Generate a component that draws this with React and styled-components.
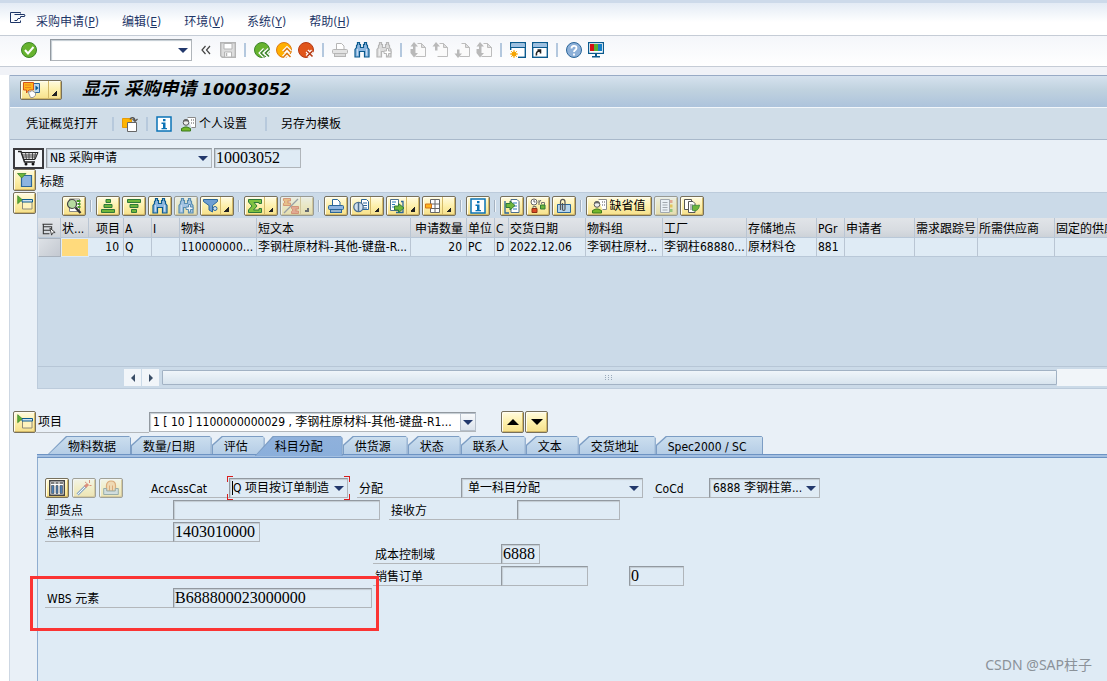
import React from 'react';
import styled, { createGlobalStyle, css } from 'styled-components';

const GlobalStyle = createGlobalStyle`
	* {
		box-sizing: border-box;
	}
	body {
		margin: 0;
		background: #fff;
		color: #000;
		font: 12px/16px 'DejaVu Sans Condensed', 'Noto Sans', 'Noto Sans CJK SC', sans-serif;
	}
	button, input, select {
		font: inherit;
		color: inherit;
		margin: 0;
	}
	svg {
		display: block;
		flex: none;
	}
`;

const Page = styled.div`
	position: relative;
	display: flex;
	flex-direction: column;
	min-height: 100vh;
	overflow: hidden;
`;

const MenuBar = styled.nav`
	display: flex;
	align-items: center;
	gap: 23px;
	height: 36px;
	padding: 6px 10px 0;
	color: #1d3567;
	border-top: 3px solid #cddaea;
	border-bottom: 1px solid #c5ccd6;
	background: linear-gradient(#e3ebf5, #fff 60%);
	> svg {
		align-self: flex-start;
	}
`;

const MenuItem = styled.button`
	padding: 0;
	border: 0;
	background: none;
	white-space: nowrap;
	&:first-of-type {
		margin-left: -13px;
	}
`;

const SystemBar = styled.div`
	display: flex;
	align-items: center;
	gap: 6px;
	height: 31px;
	padding: 0 21px 2px;
	border-bottom: 1px solid #c5ccd6;
	background: linear-gradient(#f4f6fa, #fff);
`;

const IconButton = styled.button`
	display: flex;
	align-items: center;
	justify-content: center;
	width: 16px;
	height: 16px;
	padding: 0;
	border: 0;
	background: none;
	&:first-child {
		margin-right: 7px;
	}
`;

const BarLine = styled.span`
	width: 6px;
	height: 14px;
	background: linear-gradient(#b4c8de, #b4c8de) center / 2px 14px no-repeat;
`;

const Workspace = styled.main`
	flex: 1;
	display: flex;
	flex-direction: column;
	margin-left: 9px;
	border-left: 1px solid #cdd7e3;
	background: #e9f0f7;
`;

const Band = styled.div`
	height: 8px;
	background: #f0f2f7;
`;

const TitleBar = styled.header`
	display: flex;
	align-items: center;
	gap: 20px;
	height: 32px;
	padding: 0 10px 4px;
	border-top: 1px solid #98abc6;
	background: linear-gradient(#d6e2ee, #c0d2df 45%, #adc3dc);
	h1 {
		margin: 0;
		font: italic 700 16px/24px 'DejaVu Sans', 'Noto Sans CJK SC', sans-serif;
		white-space: nowrap;
	}
	h1 span {
		font-size: 18px;
	}
`;

const FunctionBar = styled.div`
	display: flex;
	align-items: center;
	height: 33px;
	padding: 0 10px;
	border-top: 1px solid #f2f6fa;
	border-bottom: 1px solid #a9b9cb;
	background: #d0dde8;
`;

const FunctionButton = styled.button`
	display: flex;
	align-items: center;
	gap: 2px;
	padding: ${p => (p.$text ? '0 6px' : 0)};
	border: 0;
	background: none;
	white-space: nowrap;
	svg + & {
		padding-left: 0;
	}
`;

const PersonalButton = styled(FunctionButton)`
	padding: 0 10px 0 9px;
`;

const FunctionLine = styled.span`
	width: 2px;
	height: 14px;
	margin: 0 8px;
	background: #b7c9dc;
`;

const Row = styled.div`
	position: relative;
	display: flex;
	align-items: center;
	height: ${p => p.$height || 20}px;
	padding-left: ${p => p.$indent || 0}px;
	gap: ${p => p.$gap || 0}px;
`;

const Overview = styled.section`
	display: flex;
	flex-direction: column;
	padding: 8px 0 0 3px;
`;

const yellow = css`
	border: 1px solid #77705c;
	border-radius: 2px;
	background: linear-gradient(#fffbe0, #fdf0ac 50%, #f6e08a);
	box-shadow: inset 1px 1px 0 #fffdf0, inset -1px -1px 0 #d3b968;
`;

const CartButton = styled.button`
	display: flex;
	align-items: center;
	justify-content: center;
	width: 31px;
	height: 21px;
	padding: 0;
	border: 2px solid #3a3a3e;
	background: #f4f7fa;
`;

const SideButton = styled.button`
	${yellow}
	display: flex;
	align-items: center;
	justify-content: center;
	flex: none;
	width: 23px;
	height: 22px;
	padding: 0;
`;

const GridArea = styled.div`
	display: flex;
	align-items: flex-start;
	gap: 1px;
`;

const Grid = styled.div`
	flex: 1;
	min-width: 0;
	border: 1px solid #bccbdb;
	border-right: 0;
	background: #cbdae8;
`;

const GridTools = styled.div`
	display: flex;
	align-items: center;
	gap: 2px;
	height: 25px;
	padding-left: 24px;
`;

const TOOL_WIDTHS = { split: 34, service: 42, text: 66 };

const ToolButton = styled.button`
	${yellow}
	display: flex;
	align-items: center;
	justify-content: ${p => (p.$kind === 'split' || p.$kind === 'service' ? 'flex-start' : 'center')};
	flex: none;
	width: ${p => TOOL_WIDTHS[p.$kind] || 24}px;
	height: 20px;
	padding: 0 ${p => (p.$kind === 'split' || p.$kind === 'service' ? 2 : 0)}px;
	gap: 1px;
	opacity: ${p => (p.$faded ? 0.6 : 1)};
	white-space: nowrap;
`;

const SplitMark = styled.span`
	align-self: stretch;
	flex: 0 0 11px;
	margin-left: auto;
	border-left: 1px solid #d3b968;
	background: linear-gradient(135deg, transparent 50%, #222 50%) right 2px bottom 3px / 5px 5px no-repeat;
`;

const ToolLine = styled.span`
	width: 2px;
	height: 12px;
	margin: 0 2px;
	border-left: 1px solid #a5b2c0;
	border-right: 1px solid #eef3f8;
`;

const Table = styled.table`
	width: 100%;
	table-layout: fixed;
	border-collapse: separate;
	border-spacing: 0;
	th, td {
		height: 20px;
		padding: 0 1px;
		border-right: 1px solid #b9c5d3;
		border-bottom: 1px solid #b9c8d8;
		overflow: hidden;
		white-space: nowrap;
		text-align: left;
		font-weight: 400;
		line-height: 16px;
	}
	th {
		padding-top: 2px;
		background: linear-gradient(#e1e4e8, #d8dce1 60%, #cdd2d8);
	}
	td {
		height: 19px;
		background: #dfebf5;
	}
	th:last-child, td:last-child {
		border-right: 0;
	}
	.right {
		text-align: right;
		padding-right: 4px;
	}
	th.right {
		padding-right: 3px;
	}
	th svg {
		margin-left: 3px;
	}
	.pick {
		border: 1px solid #a9b2bd;
		border-left-color: #e6eaee;
		background: linear-gradient(135deg, #dde1e6, #c4c9d1);
	}
	.status {
		background: #ffda7c;
		border: 1px solid #dfebf5;
	}
`;

const GridSpace = styled.div`
	height: 109px;
	border-bottom: 1px solid #b7c6d6;
	box-sizing: content-box;
`;

const ScrollRow = styled.div`
	display: flex;
	align-items: center;
	gap: 1px;
	height: 21px;
	padding-left: 86px;
	button {
		display: flex;
		align-items: center;
		justify-content: center;
		width: 17px;
		height: 17px;
		padding: 0;
		border: 0;
		background: #f1f5f9;
	}
`;

const Thumb = styled.div`
	flex: 18;
	display: flex;
	align-items: center;
	justify-content: center;
	height: 15px;
	margin-left: 2px;
	border: 1px solid #a2b2c4;
	border-radius: 1px;
	background: linear-gradient(#f0f5fa, #d8e4ee);
`;

const Track = styled.div`
	flex: 1;
	height: 17px;
	margin-left: -1px;
	background: #f1f5f9;
`;

const Label = styled.label`
	align-self: stretch;
	flex: none;
	width: ${p => p.$width}px;
	padding: 4px 0 0 ${p => p.$pad || 2}px;
	border-bottom: 1px solid #b3b7bb;
	line-height: 15px;
	white-space: nowrap;
`;

const Caption = styled.h2`
	margin: 3px 0 0 2px;
	font-size: 12px;
	font-weight: 400;
	line-height: 16px;
`;

const fieldLook = css`
	border: 1px solid #9299a0;
	border-right-color: #b0b5ba;
	border-bottom-color: #b0b5ba;
	border-radius: 0;
	box-shadow: inset 1px 1px 1px #c3cbd2;
	background: ${p => (p.$white ? '#fff' : '#dfebf5')};
	outline: 0;
`;

const Field = styled.input`
	${fieldLook}
	flex: none;
	width: ${p => p.$width}px;
	height: 20px;
	padding: 0 1px;
	font: 16px/18px 'Liberation Serif', serif;
`;

const SelectWrap = styled.span`
	position: relative;
	flex: none;
	display: grid;
	align-items: center;
	width: ${p => p.$width}px;
	height: ${p => p.$height || 20}px;
	> * {
		grid-area: 1 / 1;
	}
	> svg {
		justify-self: end;
		margin-right: 4px;
		pointer-events: none;
	}
`;

const SelectBox = styled.select`
	${fieldLook}
	appearance: none;
	width: 100%;
	height: 100%;
	padding: 0 16px 0 ${p => p.$pad || 3}px;
`;

const ComboButton = styled.span`
	justify-self: end;
	display: flex;
	align-items: center;
	justify-content: center;
	width: 16px;
	height: 18px;
	border: 1px solid #b6bfca;
	background: linear-gradient(#f7f9fb, #dbe3ec);
	pointer-events: none;
`;

const corner = 'linear-gradient(#d81e1e, #d81e1e)';

const FocusCorners = styled.i`
	position: absolute;
	inset: -2px;
	pointer-events: none;
	background:
		${corner} left top / 6px 1px, ${corner} left top / 1px 6px,
		${corner} right top / 6px 1px, ${corner} right top / 1px 6px,
		${corner} left bottom / 6px 1px, ${corner} left bottom / 1px 6px,
		${corner} right bottom / 6px 1px, ${corner} right bottom / 1px 6px,
		linear-gradient(#000, #000) 5px 5px / 1px 14px;
	background-repeat: no-repeat;
`;

const ItemRow = styled.div`
	display: flex;
	align-items: center;
	height: 22px;
	margin-top: 22px;
	padding-left: 3px;
`;

const Spinners = styled.div`
	display: flex;
	gap: 1px;
	margin-left: 25px;
`;

const TabStrip = styled.div`
	display: flex;
	height: 22px;
	margin: 3px 0 0 27px;
	padding-left: 11px;
	background: linear-gradient(#6d93c3 1px, #a3bfe1 1px 3px, #6d93c3 3px) bottom / 100% 4px no-repeat;
`;

const TAB_PADDING = {
	first: '0 15px 0 20px',
	active: '0 20px',
	plain: '0 17px 0 12px',
};

const Tab = styled.button`
	--slope: ${p => (p.$kind === 'plain' ? '0 9px, 10px 0' : '0 100%, 18px 0')};
	position: relative;
	z-index: ${p => (p.$kind === 'active' ? 1 : 0)};
	height: ${p => (p.$kind === 'active' ? 20 : 18)}px;
	margin-left: ${p => (p.$kind === 'active' ? -10 : 0)}px;
	padding: ${p => TAB_PADDING[p.$kind]};
	border: 0;
	background: #7c9dc4;
	clip-path: polygon(0 100%, var(--slope), calc(100% - 2px) 0, 100% 2px, 100% 100%);
	line-height: 22px;
	white-space: nowrap;
	&::before {
		content: '';
		position: absolute;
		z-index: -1;
		inset: 1px 1px 0;
		background: ${p => (p.$kind === 'active' ? 'linear-gradient(#8fb1dc, #8bafdb)' : 'linear-gradient(#cbdeee, #b5cde6)')};
		clip-path: polygon(0 100%, var(--slope), 100% 0, 100% 100%);
	}
`;

const Panel = styled.section`
	flex: 1;
	display: flex;
	flex-direction: column;
	gap: 2px;
	margin-left: 27px;
	padding: 20px 0 40px 7px;
	border-left: 1px solid #8fadd0;
	background: #dfebf5;
`;

const PanelTools = styled.div`
	display: flex;
	gap: 3px;
	margin-right: 26px;
`;

const Highlight = styled.i`
	position: absolute;
	left: -15px;
	top: -12px;
	width: 349px;
	height: 55px;
	border: 3px solid #fb3433;
	pointer-events: none;
`;

const Watermark = styled.div`
	position: absolute;
	right: 15px;
	bottom: 7px;
	color: #8b9299;
	font: 14px/18px 'Noto Sans', 'Noto Sans CJK SC', sans-serif;
`;

const Svg = ({ size = 16, children }) => (
	<svg width={size} height={size} viewBox='0 0 16 16' fill='none' aria-hidden='true'>
		{children}
	</svg>
);

const Caret = () => (
	<svg width='10' height='5' viewBox='0 0 10 5' aria-hidden='true'>
		<path d='M0 0h10L5 5z' fill='#22386c' />
	</svg>
);

const Disc = ({ fill, edge, children }) => (
	<Svg>
		<circle cx='8' cy='8' r='7.5' fill={fill} stroke={edge} />
		{children}
	</Svg>
);

const Binoculars = ({ fill = '#8db7e0', line = '#0b5a8e', plus }) => (
	<Svg>
		<path
			d='M3.500.500h2v2h1v3h3v-3h1v-2h2v2l1 1v2l1.500 2v7.500h-4.500V9.500h-5v5.500H1V7.500l1.500-2v-2l1-1z'
			fill={fill}
			stroke={line}
			strokeWidth='1.200'
		/>
		<path d='M3.500 7v6.500M12.500 7v6.500' stroke='#fff' strokeOpacity='.5' />
		{plus && <path d='M10.500 6.500h2v2.500h2.500v2.500h-2.500V14h-2v-2.500H8V9h2.500z' fill='#fff' stroke={line} />}
	</Svg>
);

const Page16 = ({ up, down, both }) => (
	<Svg>
		<path d='M7.500 1.500H11.500L15.500 5.500v9h-10' fill='#fafafa' stroke='#bdbdbd' />
		<path d='M11.500 1.500v4h4z' fill='#ddd' stroke='#bdbdbd' />
		{up && <path d='M4 0 .500 4.500H3v4h2.500v-4h2.500z' fill='#b9b9b9' />}
		{down && <path d='M4 16 .500 11.500H3v-4h2.500v4h2.500z' fill='#b9b9b9' />}
		{both && <path d='M4 0 .500 4.500H3v2.500H.500v4H3L.500 11 4 15.500l4-4.500H5.500V4.500h2.500z' fill='#b9b9b9' />}
	</Svg>
);

const Printer = ({ line = '#b5b5b5', fill = '#e3e3e3' }) => (
	<Svg>
		<path d='M4.500 7V1.500h5l2.500 2.500v3' fill='#fff' stroke={line} />
		<rect x='.5' y='7.500' width='15' height='4' rx='1' fill={fill} stroke={line} />
		<path d='M2 12h12v3H2z' fill={line} />
		<path d='M3 13h10' stroke='#fff' />
	</Svg>
);

const Person = () => (
	<Svg>
		<path d='M6.500 1.500h8v10h-4' fill='#fff' stroke='#8a8a8a' />
		<path d='M10 4h1m1 0h1M10 7h1m1 0h1' stroke='#555' strokeWidth='1.200' />
		<circle cx='5' cy='6.500' r='2.800' fill='#eee' stroke='#555' />
		<path d='M2 6c0-4 6-4 6 0-2-1-4-1-6 0z' fill='#666' />
		<path d='M.5 15v-2.500L4 11h2l3.500 1.500V15z' fill='#75b82b' stroke='#3b7a1c' />
	</Svg>
);

const Info = () => (
	<Svg>
		<rect x='1' y='1' width='14' height='14' fill='#fff' stroke='#0a73b6' strokeWidth='1.500' />
		<path d='M7 3h2.500v2.200H7zM5.500 6.500h4V12H11v1.300H5.500V12H7V8H5.500z' fill='#0a73b6' />
	</Svg>
);

const Exit = () => (
	<Svg>
		<path d='M10.500 4.500V3.500h-10v10h10V11.500' stroke='#1d3567' />
		<path d='M4.500 5.500h10l.5 1.500-1 .5H10.500M11 7.500l-1 2H8l-1 2H4.500' stroke='#1d3567' />
	</Svg>
);

const Check = () => (
	<Disc fill='#67b32e' edge='#3c842a'>
		<path d='m4 8 3 3.500 5.500-6.500' stroke='#fff' strokeWidth='2' />
	</Disc>
);

const Floppy = () => (
	<Svg>
		<path d='M.7.7h14.600v14.600H2.200L.7 13.800z' fill='#ddd' stroke='#b5b5b5' strokeWidth='1.400' />
		<path d='M4 1.500h8v5.500H4zM4.500 10h7v5h-7z' fill='#fff' stroke='#b5b5b5' />
		<path d='M6.500 11v3' stroke='#b5b5b5' strokeWidth='1.500' />
	</Svg>
);

const NAV_SHAPES = {
	back: 'm10.500 7.500-3.500 3.500 3.500 3.500m4.500-7-3.500 3.500 3.500 3.500',
	up: 'M7.500 10 11 6.500l3.500 3.500m-7 5L11 11.500l3.500 3.500',
	stop: 'm9 9 5.500 5.500m0-5.500L9 14.500',
};

const NavIcon = ({ fill, edge, kind }) => (
	<Disc fill={fill} edge={edge}>
		<path d={NAV_SHAPES[kind]} stroke='#fff' strokeWidth='4' />
		<path d={NAV_SHAPES[kind]} stroke={edge} strokeWidth='1.600' />
	</Disc>
);

const WindowIcon = ({ link }) => (
	<Svg>
		<rect x='.7' y='.7' width='14.600' height='14.600' fill='#fff' stroke='#0b5a8e' strokeWidth='1.400' />
		<path d='M1.500 1.500h13V5h-13z' fill='#9cc0e2' />
		<path d='M1 5.500h14' stroke='#0b5a8e' />
		{link ? (
			<path d='M4.500 13.500c-.5-3 .5-4.500 3.500-4.500M5.500 8h3v3.500' stroke='#222' strokeWidth='1.600' />
		) : (
			<>
				<path d='M0 8h8v8H0z' fill='#fff' />
				<circle cx='4' cy='12' r='2.500' fill='#f5a400' />
				<path d='M4 8v8M0 12h8M1.200 9.200l5.600 5.600m0-5.600-5.600 5.600' stroke='#f5a400' />
			</>
		)}
	</Svg>
);

const Help = () => (
	<Disc fill='#8db0d8' edge='#2b669a'>
		<path d='M5.500 6.500c0-3.500 5-3.500 5-.5 0 2-2.500 2-2.500 4M8 11.500v2' stroke='#fff' strokeWidth='1.800' />
	</Disc>
);

const Monitor = () => (
	<Svg>
		<rect x='.6' y='.6' width='14.800' height='10.800' fill='#fff' stroke='#0b5a8e' strokeWidth='1.200' />
		<path d='M2 2h4v7H2z' fill='#d40f14' />
		<path d='M6 2h4v7H6z' fill='#58b030' />
		<path d='M10 2h4v7h-4z' fill='#157fc8' />
		<path d='M7 12h2v2h3v1.500H4V14h3z' fill='#0b5a8e' />
	</Svg>
);

const Services = () => (
	<svg width='18' height='16' viewBox='0 0 18 16' fill='none' aria-hidden='true'>
		<path d='M10.500 1.500h6v9h-5' fill='#b9d7ef' stroke='#2b669a' />
		<path d='m12.500 3.500 3 2.500-3 2.500z' fill='#0b5a8e' />
		<path d='M.5.500h10v7.500H6L3.500 11V8h-3z' fill='#ffb51c' stroke='#d3531b' />
		<path d='M2.500 3h6M2.500 5.500h6' stroke='#d3531b' strokeDasharray='1 1' />
		<path d='m5 9.500 2 .5 2-1.500L12.500 11v2.500L10 15.500H7.500z' fill='#fff' stroke='#999' />
	</svg>
);

const OtherDoc = () => (
	<Svg>
		<path d='M.5 2.500h9v9h-9z' fill='#ffb400' stroke='#e59a0a' />
		<path d='M5.500 6.500h9v9h-9z' fill='#fff' stroke='#666' />
		<path d='M8 3.500c1-3 5-2.500 5 1.500M10.500 3l2.500 2.500L15.500 3' stroke='#555' strokeWidth='1.200' />
	</Svg>
);

const Cart = () => (
	<svg width='22' height='16' viewBox='0 0 22 16' fill='none' aria-hidden='true'>
		<path d='M0 1.500h3L6.500 12H17' stroke='#222' strokeWidth='1.500' />
		<path d='M3.500 2.500H20L17 9.500H6z' fill='#ddd' stroke='#222' />
		<path d='M4 5h15M5 7h13M7.500 2.500l1 7m2.500-7v7m3.500-7v7m3-7-1 7' stroke='#333' strokeWidth='.8' />
		<circle cx='8' cy='14' r='1.500' fill='#111' />
		<circle cx='15' cy='14' r='1.500' fill='#111' />
	</svg>
);

const Expand = () => (
	<Svg>
		<path d='M4.500 3.500h10v11h-10z' fill='#8db4e0' stroke='#2b669a' strokeWidth='1.200' />
		<path d='M.5 1.500h8.500L4.700 6z' fill='#6fb63a' stroke='#3b842a' strokeWidth='.8' />
	</Svg>
);

const Collapse = () => (
	<Svg>
		<path d='M5.500 5.500h9.500v8.500H5.500z' fill='#fff3be' stroke='#8f8a78' />
		<path d='M5 4.500h10.500v2.500H5z' fill='#cfe2f3' stroke='#0b5a8e' />
		<path d='M.7.700v8L5.200 4.700z' fill='#5fae34' stroke='#3b842a' strokeWidth='.7' />
	</Svg>
);

const Details = () => (
	<Svg>
		<path d='M3.500 1h10v12.500h-10z' fill='#fff' stroke='#888' />
		<path d='M10.500 3h4m-3 3h3m-3 3h3' stroke='#4a9a2c' strokeWidth='1.800' />
		<circle cx='6' cy='6' r='4.500' fill='#b6dba0' stroke='#444' strokeWidth='1.200' />
		<path d='m9.500 9.500 5 5.500' stroke='#333' strokeWidth='2.400' />
	</Svg>
);

const SortBars = ({ down }) => (
	<Svg>
		<path
			d={down ? 'M1.500 1.500h13v3h-13zM4 6.500h8v3H4zM5.500 11.500h5v3h-5z' : 'M6 1.500h4.500v3H6zM4 6.500h8v3H4zM1.500 11.500h13v3h-13z'}
			fill='#6fb63a'
			stroke='#2f7a3a'
		/>
	</Svg>
);

const Funnel = () => (
	<Svg>
		<path d='M.5 1.500h14v2l-5 4V14L6 12V7.500l-5.500-4z' fill='#6e9fd2' stroke='#2b669a' />
		<circle cx='12' cy='10.500' r='2' fill='#cfe2f3' stroke='#2b669a' />
	</Svg>
);

const Sigma = () => (
	<Svg>
		<path d='M1.500 1.500h13v4H12V4.500H7L10 8l-3.500 4H12v-1.500h2.500v4h-13V12L5 8 1.500 4z' fill='#7fc241' stroke='#2f7a3a' />
	</Svg>
);

const Subtotal = () => (
	<Svg>
		<path d='M.5.500h7V3H4.500L5.500 4l-1 1h3v2.500h-7V5.500L2 4 .5 2.500z' fill='#fbb04a' stroke='#d3531b' strokeWidth='.8' />
		<path d='M8.500 8.500h7V11h-3l1 1-1 1h3v2.500h-7v-2L10 12l-1.500-1.500z' fill='#f08a5d' stroke='#d3531b' strokeWidth='.8' />
		<path d='M15 1 1 15' stroke='#777' strokeWidth='1.200' />
	</Svg>
);

const Views = () => (
	<Svg>
		<path d='M8.500 1.500h5l2 2v8h-7z' fill='#fff' stroke='#2b669a' />
		<path d='M10 5h4m-4 2.500h4M10 10h4' stroke='#2b669a' />
		<circle cx='5.500' cy='9' r='4.700' fill='#cfe0ef' stroke='#4c6e8e' strokeWidth='1.300' />
		<path d='M5.500 5v8' stroke='#4c6e8e' strokeWidth='1.500' />
	</Svg>
);

const Export = ({ flip }) => (
	<Svg>
		<path d={flip ? 'M7 1.500h6l2 2v11H7z' : 'M1.500 1.500h8v11h-8z'} fill='#fff' stroke='#4c6e8e' />
		<path d={flip ? 'M9 5h4M9 8h4m-4 3h4' : 'M3 4h4M3 6.500h3M3 9h2'} stroke='#2b78b8' />
		<path d={flip ? 'M1 3v12h4' : 'M12 3.500h2v11H7'} stroke='#2b669a' strokeWidth='1.300' />
		<path
			d={flip ? 'M2 5.500h4v-2.500l5 4.500-5 4.500V9.500H2z' : 'M5.500 8h4V5.500l5.500 4.500-5.500 4.500V12h-4z'}
			fill='#6fb63a'
			stroke='#2f7a3a'
		/>
	</Svg>
);

const Layout = () => (
	<Svg>
		<path d='M5.500 1.500h9v13h-9zM5.500 6h9m-9 4.500h9M10 1.500v13' fill='#fff' stroke='#666' />
		<path d='M.5 6h6v4h-6z' fill='#ffb51c' stroke='#d3711b' />
	</Svg>
);

const Release = () => (
	<Svg>
		<circle cx='4' cy='4' r='3' fill='#fff' stroke='#666' />
		<path d='M4 2v2h1.500M9 2v5m2-5L9 4.500' stroke='#666' />
		<path d='M2 10.500h5v4H2z' fill='#dd4a25' stroke='#8f3014' />
		<path d='M3 10V8.500h3V10M11.500 6V4.500h3V7' stroke='#777' />
		<path d='M10.500 7h4.500v4h-4.500z' fill='#6fb63a' stroke='#2f7a3a' />
	</Svg>
);

const Attach = () => (
	<Svg>
		<path d='M1.500 6.500h13v8h-13z' fill='#b4d4ec' stroke='#2b669a' />
		<path d='M4.500 12V4c0-3.500 4.500-3.500 4.500 0v7c0 2-2.500 2-2.500 0V5' stroke='#555' strokeWidth='1.200' />
	</Svg>
);

const Notes = () => (
	<Svg>
		<path d='M2.500 1.500h9v13h-9z' fill='#fff' stroke='#888' />
		<path d='M4.500 4.500h5m-5 2.500h5m-5 2.500h5m-5 2.500h5' stroke='#888' />
		<path d='M12 2h2.500v3H12z' fill='#f08a5d' />
		<path d='M12 6.500h2.500v3H12z' fill='#f5b800' />
		<path d='M12 11h2.500v3H12z' fill='#6fb63a' />
	</Svg>
);

const Copies = () => (
	<Svg>
		<path d='M.5 1.500h7v10h-7z' fill='#fff' stroke='#555' />
		<path d='M4.500 3.500h4.500l2 2v9h-6.500z' fill='#fff' stroke='#555' />
		<path d='M6 7h3m-3 2h3m-3 2h3' stroke='#777' />
		<path d='M8.500 7.500c2-1 4 .5 7-.5-.5 5-3.500 6.500-7 5.500z' fill='#6fb63a' stroke='#2f7a3a' strokeWidth='.7' />
	</Svg>
);

const Columns = () => (
	<Svg>
		<path d='M.7.700h14.600v14.600H.7z' fill='#fff' stroke='#444' strokeWidth='1.400' />
		<path d='M2 3h3.500m1 0h3m1 0H14' stroke='#555' strokeWidth='1.500' />
		<path d='M2.500 5.500H5V13.500H2.500zM7 5.500h2V13.500H7zM11 5.500h2.500V13.500H11z' fill='#4c7fb5' stroke='#444' strokeWidth='.6' />
	</Svg>
);

const Wand = () => (
	<Svg>
		<path d='m1.500 14.500 8.500-8.500' stroke='#5e86a8' strokeWidth='3' />
		<path d='m1.500 14.500 8.500-8.500' stroke='#fff' />
		<path d='m9 7 3-3' stroke='#d9542b' strokeWidth='3' />
		<path d='M13.500 0v3M15.500 5.500h-2M9 2l1.500 1' stroke='#d9542b' />
	</Svg>
);

const Arch = () => (
	<Svg>
		<path d='M3.500 11V5.500c0-6 9-6 9 0V11z' fill='#fbd08a' stroke='#d9822b' strokeWidth='1.200' />
		<path d='M6.500 11V5.500M9.500 11V5.500' stroke='#d9822b' />
		<path d='M.7 8.500h3V11h8.600V8.500h3v6H.7z' fill='#c8d5cf' stroke='#6c8577' />
	</Svg>
);

const SelectAll = () => (
	<Svg size={14}>
		<path d='M.5 2.500h11.500m-10.500 0v11h7M1.500 5.500h9.500v4h-9.500z' stroke='#333' strokeWidth='1.200' />
		<path d='m9 7 6 5-3 .5L11 15z' fill='#fff' stroke='#333' />
	</Svg>
);

const Arrow = ({ d, fill = '#3a4d66' }) => (
	<svg width='12' height='12' viewBox='0 0 12 12' aria-hidden='true'>
		<path d={d} fill={fill} />
	</svg>
);

const Select = ({ id, label, width, height, pad, value, combo, focused, white }) => (
	<SelectWrap $width={width} $height={height}>
		<SelectBox id={id} aria-label={label} $pad={pad} $white={white} defaultValue={value}>
			<option>{value}</option>
		</SelectBox>
		{combo ? (
			<ComboButton>
				<Caret />
			</ComboButton>
		) : (
			<Caret />
		)}
		{focused && <FocusCorners />}
	</SelectWrap>
);

const MENUS = [
	['采购申请', 'P'],
	['编辑', 'E'],
	['环境', 'V'],
	['系统', 'Y'],
	['帮助', 'H'],
];

const SYSTEM_TOOLS = [
	['保存', <Floppy />],
	null,
	['返回', <NavIcon kind='back' fill='#67b32e' edge='#3c842a' />],
	['退出', <NavIcon kind='up' fill='#ffb000' edge='#dd7a12' />],
	['取消', <NavIcon kind='stop' fill='#e0561c' edge='#b53a14' />],
	null,
	['打印', <Printer />],
	['查找', <Binoculars />],
	['继续查找', <Binoculars fill='#ddd' line='#b5b5b5' plus />],
	null,
	['第一页', <Page16 both />],
	['上一页', <Page16 up />],
	['下一页', <Page16 down />],
	['最后一页', <Page16 both />],
	null,
	['新建会话', <WindowIcon />],
	['快捷方式', <WindowIcon link />],
	null,
	['帮助', <Help />],
	['布局', <Monitor />],
];

const GRID_TOOLS = [
	{ name: '明细', icon: <Details /> },
	null,
	{ name: '升序', icon: <SortBars /> },
	{ name: '降序', icon: <SortBars down /> },
	{ name: '查找', icon: <Binoculars /> },
	{ name: '继续查找', icon: <Binoculars plus />, faded: true },
	{ name: '过滤', icon: <Funnel />, kind: 'split' },
	null,
	{ name: '合计', icon: <Sigma />, kind: 'split' },
	{ name: '小计', icon: <Subtotal />, kind: 'split', faded: true },
	null,
	{ name: '打印', icon: <Printer line='#2b669a' fill='#8db4e0' /> },
	{ name: '视图', icon: <Views />, kind: 'split' },
	{ name: '导出', icon: <Export />, kind: 'split' },
	{ name: '布局', icon: <Layout />, kind: 'split' },
	null,
	{ name: '信息', icon: <Info /> },
	null,
	{ name: '转移', icon: <Export flip /> },
	{ name: '审批', icon: <Release /> },
	{ name: '附件', icon: <Attach /> },
	null,
	{ name: '缺省值', icon: <Person />, kind: 'text' },
	{ name: '文本', icon: <Notes />, faded: true },
	{ name: '复制', icon: <Copies /> },
];

const COLUMNS = [
	{ width: 23, title: <SelectAll />, cell: '', className: 'pick' },
	{ width: 28, title: '状...', cell: '', className: 'status' },
	{ width: 35, title: '项目', cell: '10', className: 'right' },
	{ width: 28, title: 'A', cell: 'Q' },
	{ width: 28, title: 'I', cell: '' },
	{ width: 77, title: '物料', cell: '110000000...' },
	{ width: 154, title: '短文本', cell: '李钢柱原材料-其他-键盘-R...' },
	{ width: 56, title: '申请数量', cell: '20', className: 'right' },
	{ width: 28, title: '单位', cell: 'PC' },
	{ width: 14, title: 'C', cell: 'D' },
	{ width: 77, title: '交货日期', cell: '2022.12.06' },
	{ width: 77, title: '物料组', cell: '李钢柱原材...' },
	{ width: 84, title: '工厂', cell: '李钢柱68880...' },
	{ width: 70, title: '存储地点', cell: '原材料仓' },
	{ width: 28, title: 'PGr', cell: '881' },
	{ width: 70, title: '申请者', cell: '' },
	{ width: 63, title: '需求跟踪号', cell: '' },
	{ width: 77, title: '所需供应商', cell: '' },
	{ title: '固定的供应商', cell: '' },
];

const TABS = ['物料数据', '数量/日期', '评估', '科目分配', '供货源', '状态', '联系人', '文本', '交货地址', 'Spec2000 / SC'];

const tabKind = index => (index === 0 ? 'first' : index === 3 ? 'active' : 'plain');

const App = () => (
	<Page>
		<GlobalStyle />
		<MenuBar>
			<Exit />
			{MENUS.map(([name, key]) => (
				<MenuItem key={key}>
					{name}(<u>{key}</u>)
				</MenuItem>
			))}
		</MenuBar>
		<SystemBar>
			<IconButton aria-label='回车'>
				<Check />
			</IconButton>
			<Select label='命令' width={142} height={22} white value='' />
			<IconButton aria-label='收起'>
				<Svg>
					<path d='m7.500 4-3.500 4 3.500 4m4.500-8-3.500 4 3.500 4' stroke='#444' strokeWidth='1.200' />
				</Svg>
			</IconButton>
			{SYSTEM_TOOLS.map((tool, i) =>
				tool ? (
					<IconButton key={i} aria-label={tool[0]}>
						{tool[1]}
					</IconButton>
				) : (
					<BarLine key={i} />
				)
			)}
		</SystemBar>
		<Band />
		<Workspace>
			<TitleBar>
				<ToolButton $kind='service' aria-label='服务'>
					<Services />
					<SplitMark />
				</ToolButton>
				<h1>
					<span>显示 采购申请</span> 10003052
				</h1>
			</TitleBar>
			<FunctionBar>
				<FunctionButton $text>凭证概览打开</FunctionButton>
				<FunctionLine />
				<FunctionButton aria-label='其他凭证'>
					<OtherDoc />
				</FunctionButton>
				<FunctionLine />
				<FunctionButton aria-label='信息'>
					<Info />
				</FunctionButton>
				<PersonalButton>
					<Person />
					个人设置
				</PersonalButton>
				<FunctionLine />
				<FunctionButton $text>另存为模板</FunctionButton>
			</FunctionBar>
			<Overview>
				<Row $gap={2}>
					<CartButton aria-label='购物车'>
						<Cart />
					</CartButton>
					<Select label='凭证类型' width={166} value='NB 采购申请' />
					<Field $width={87} aria-label='采购申请' defaultValue='10003052' readOnly />
				</Row>
				<Row $height={24} $gap={2}>
					<SideButton aria-label='展开标题'>
						<Expand />
					</SideButton>
					<Caption>标题</Caption>
				</Row>
				<GridArea>
					<SideButton aria-label='折叠概览'>
						<Collapse />
					</SideButton>
					<Grid>
						<GridTools>
							{GRID_TOOLS.map((tool, i) =>
								tool ? (
									<ToolButton key={i} aria-label={tool.name} $kind={tool.kind} $faded={tool.faded}>
										{tool.icon}
										{tool.kind === 'text' && tool.name}
										{tool.kind === 'split' && <SplitMark />}
									</ToolButton>
								) : (
									<ToolLine key={i} />
								)
							)}
						</GridTools>
						<Table>
							<colgroup>
								{COLUMNS.map((column, i) => (
									<col key={i} width={column.width} />
								))}
							</colgroup>
							<thead>
								<tr>
									{COLUMNS.map((column, i) => (
										<th key={i} className={column.className === 'right' ? 'right' : undefined}>
											{column.title}
										</th>
									))}
								</tr>
							</thead>
							<tbody>
								<tr>
									{COLUMNS.map((column, i) => (
										<td key={i} className={column.className}>
											{column.cell}
										</td>
									))}
								</tr>
							</tbody>
						</Table>
						<GridSpace />
						<ScrollRow>
							<button aria-label='向左'>
								<Arrow d='M8 2v8L4 6z' />
							</button>
							<button aria-label='向右'>
								<Arrow d='M4 2v8l4-4z' />
							</button>
							<Thumb>
								<svg width='9' height='6' viewBox='0 0 9 6' aria-hidden='true'>
									<path d='M0 .5h9M0 2.500h9M0 4.500h9' stroke='#9aa9ba' strokeDasharray='1 2' />
								</svg>
							</Thumb>
							<Track />
						</ScrollRow>
					</Grid>
				</GridArea>
			</Overview>
			<ItemRow>
				<SideButton aria-label='折叠项目'>
					<Collapse />
				</SideButton>
				<Label htmlFor='item' $width={113}>
					项目
				</Label>
				<Select id='item' width={327} white combo value='1 [ 10 ] 1100000000029 , 李钢柱原材料-其他-键盘-R1...' />
				<Spinners>
					<SideButton aria-label='上一项目'>
						<Arrow d='M0 9h12L6 3z' fill='#000' />
					</SideButton>
					<SideButton aria-label='下一项目'>
						<Arrow d='M0 3h12L6 9z' fill='#000' />
					</SideButton>
				</Spinners>
			</ItemRow>
			<TabStrip role='tablist'>
				{TABS.map((tab, i) => (
					<Tab key={tab} role='tab' aria-selected={i === 3} $kind={tabKind(i)}>
						{tab}
					</Tab>
				))}
			</TabStrip>
			<Panel>
				<Row>
					<PanelTools>
						<ToolButton aria-label='列'>
							<Columns />
						</ToolButton>
						<ToolButton aria-label='更改' $faded>
							<Wand />
						</ToolButton>
						<ToolButton aria-label='分配' $faded>
							<Arch />
						</ToolButton>
					</PanelTools>
					<Label htmlFor='category' $width={80}>
						AccAssCat
					</Label>
					<Select id='category' width={119} focused value='Q 项目按订单制造' />
					<Row $indent={9}>
						<Label htmlFor='distribution' $width={104}>
							分配
						</Label>
						<Select id='distribution' width={182} pad={6} value='单一科目分配' />
					</Row>
					<Row $indent={10}>
						<Label htmlFor='company' $width={56}>
							CoCd
						</Label>
						<Select id='company' width={111} value='6888 李钢柱第...' />
					</Row>
				</Row>
				<Row>
					<Label htmlFor='unloading' $width={128}>
						卸货点
					</Label>
					<Field id='unloading' $width={207} readOnly />
					<Row $indent={9}>
						<Label htmlFor='recipient' $width={128}>
							接收方
						</Label>
						<Field id='recipient' $width={103} readOnly />
					</Row>
				</Row>
				<Row>
					<Label htmlFor='account' $width={128}>
						总帐科目
					</Label>
					<Field id='account' $width={87} defaultValue='1403010000' readOnly />
				</Row>
				<Row $indent={328}>
					<Label htmlFor='area' $width={128}>
						成本控制域
					</Label>
					<Field id='area' $width={39} defaultValue='6888' readOnly />
				</Row>
				<Row $indent={328}>
					<Label htmlFor='order' $width={128}>
						销售订单
					</Label>
					<Field id='order' $width={87} readOnly />
					<Row $indent={41}>
						<Field $width={55} aria-label='销售订单项目' defaultValue='0' readOnly />
					</Row>
				</Row>
				<Row>
					<Label htmlFor='wbs' $width={128}>
						WBS 元素
					</Label>
					<Field id='wbs' $width={199} defaultValue='B688800023000000' readOnly />
					<Highlight />
				</Row>
			</Panel>
		</Workspace>
		<Watermark>CSDN @SAP柱子</Watermark>
	</Page>
);

export default App;
